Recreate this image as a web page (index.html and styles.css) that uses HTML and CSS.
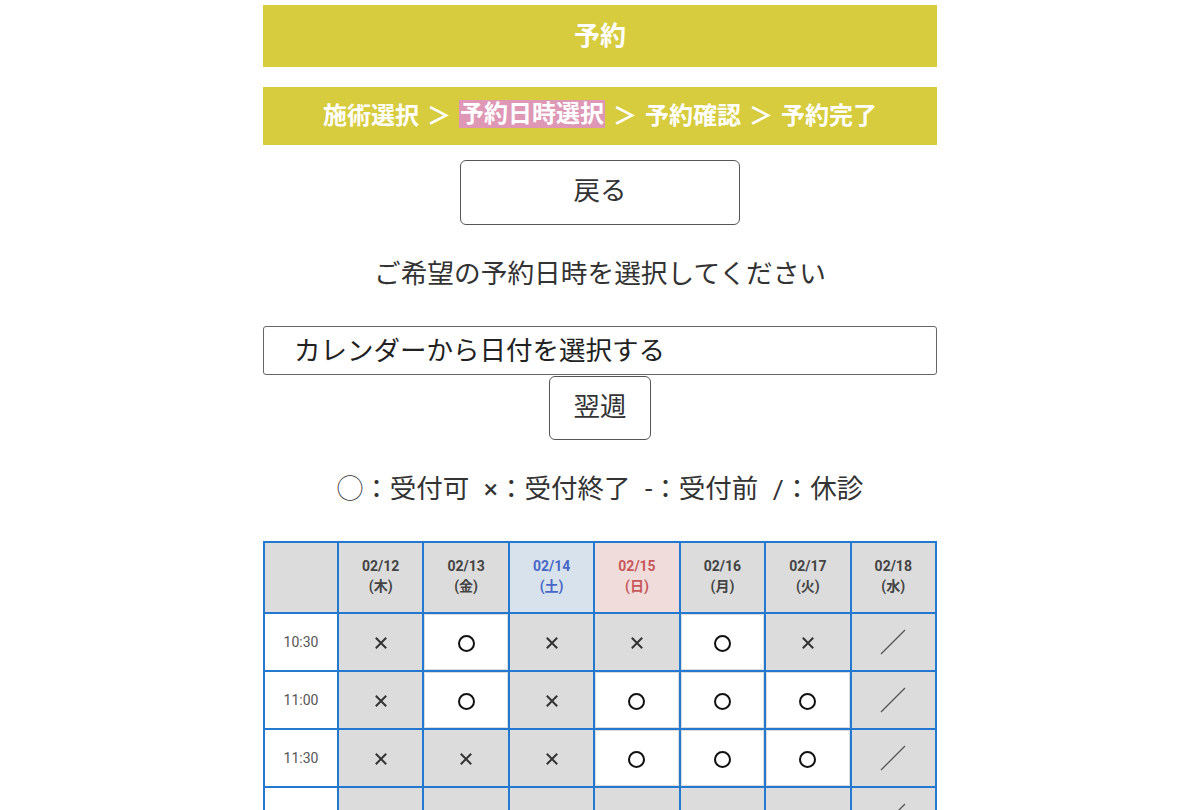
FILE: index.html
```html
<!DOCTYPE html>
<html lang="ja">
<head>
<meta charset="utf-8">
<title>予約</title>
<link rel="stylesheet" href="styles.css">
</head>
<body>
<div class="page">
  <header class="title-bar">予約</header>
  <nav class="steps">
    <span>施術選択</span><span class="sep">＞</span><span class="current">予約日時選択</span><span class="sep">＞</span><span>予約確認</span><span class="sep">＞</span><span>予約完了</span>
  </nav>
  <div class="center"><button class="btn back">戻る</button></div>
  <p class="lead">ご希望の予約日時を選択してください</p>
  <div class="select">カレンダーから日付を選択する</div>
  <div class="center"><button class="btn next">翌週</button></div>
  <p class="legend">◯：受付可 ×：受付終了 -：受付前 /：休診</p>
  <table class="cal">
    <thead>
      <tr>
        <th class="corner"></th>
        <th>02/12<br>(木)</th>
        <th>02/13<br>(金)</th>
        <th class="sat">02/14<br>(土)</th>
        <th class="sun">02/15<br>(日)</th>
        <th>02/16<br>(月)</th>
        <th>02/17<br>(火)</th>
        <th>02/18<br>(水)</th>
      </tr>
    </thead>
    <tbody id="rows"></tbody>
  </table>
</div>
<script src="app.js"></script>
</body>
</html>
```
FILE: app.js
```js
var data = [
  ["10:30", "xoxxox/"],
  ["11:00", "xoxooo/"],
  ["11:30", "xxxooo/"],
  ["", "xxxxxx/"]
];
var icons = {
  x: '<svg class="ic" width="14" height="14" viewBox="0 0 14 14"><path d="M1.8 1.8L12.2 12.2M12.2 1.8L1.8 12.2" stroke="#333" stroke-width="2" fill="none"/></svg>',
  o: '<span class="circ"></span>',
  "/": '<svg class="ic" width="28" height="28" viewBox="0 0 28 28"><path d="M2 26L26 2" stroke="#555" stroke-width="1.3" fill="none"/></svg>'
};
var html = "";
data.forEach(function (r) {
  html += '<tr><td class="time">' + r[0] + '</td>';
  r[1].split("").forEach(function (c) {
    html += '<td class="' + (c === "o" ? "ok" : "ng") + '">' + icons[c] + '</td>';
  });
  html += '</tr>';
});
document.getElementById("rows").innerHTML = html;
```
FILE: styles.css
```css
* { box-sizing: border-box; }
html, body { margin: 0; padding: 0; background: #fff; }
body {
  font-family: "Roboto", "Noto Sans CJK JP", sans-serif;
  color: #333;
}
.page {
  width: 674px;
  margin: 0 auto;
  padding-top: 5px;
}
.title-bar {
  height: 62px;
  background: #d6cc3e;
  color: #fff;
  font-weight: bold;
  font-size: 26px;
  display: flex;
  align-items: center;
  justify-content: center;
  padding-bottom: 6px;
}
.steps {
  margin-top: 20px;
  height: 58px;
  background: #d6cc3e;
  color: #fff;
  font-weight: bold;
  font-size: 24px;
  display: flex;
  align-items: center;
  justify-content: center;
  padding-bottom: 5px;
}
.steps .sep { margin: 0 8px; }
.steps .current { background: #de97b5; line-height: 28px; padding: 0 1px; }
.center { display: flex; justify-content: center; }
.btn {
  font-family: inherit;
  font-size: 26.5px;
  color: #333;
  background: #fff;
  border: 1px solid #555;
  border-radius: 6px;
  padding: 0 0 9px;
}
.back { margin-top: 15px; width: 280px; height: 65px; }
.next { margin-top: 1px; width: 102px; height: 64px; padding-bottom: 8px; }
.lead {
  margin: 0;
  margin-top: 31px;
  font-size: 26.7px;
  line-height: 36px;
  text-align: center;
  color: #333;
}
.select {
  margin-top: 34px;
  height: 49px;
  border: 1px solid #666;
  border-radius: 3px;
  font-size: 26.5px;
  line-height: 48px;
  padding-left: 30px;
  color: #222;
}
.legend {
  margin: 0;
  margin-top: 32px;
  font-size: 26.5px;
  line-height: 34px;
  text-align: center;
  color: #333;
  word-spacing: 8px;
}
.cal {
  margin-top: 35px;
  width: 674px;
  table-layout: fixed;
  border-collapse: separate;
  border-spacing: 0;
  border: 1px solid #2279cf;
}
.cal th, .cal td {
  border: 1px solid #2279cf;
  padding: 0;
  text-align: center;
  vertical-align: middle;
}
.cal th {
  height: 71px;
  background: #dcdcdc;
  color: #444;
  font-size: 14px;
  font-weight: bold;
  line-height: 20px;
  padding-bottom: 3px;
}
.cal th.corner { width: 74px; }
.cal th.sat { background: #d8e2ec; color: #4867c6; }
.cal th.sun { background: #f0dcdb; color: #c8575a; }
.cal td { height: 58px; }
.cal td.time { background: #fff; color: #555; font-size: 14px; }
.cal td.ng { background: #dcdcdc; }
.cal td.ok { background: #fff; box-shadow: inset 0 0 0 1px #dcdcdc; }
.ic { display: inline-block; vertical-align: middle; }
.circ {
  display: inline-block;
  vertical-align: middle;
  width: 17px;
  height: 17px;
  border: 2px solid #111;
  border-radius: 50%;
}
```
